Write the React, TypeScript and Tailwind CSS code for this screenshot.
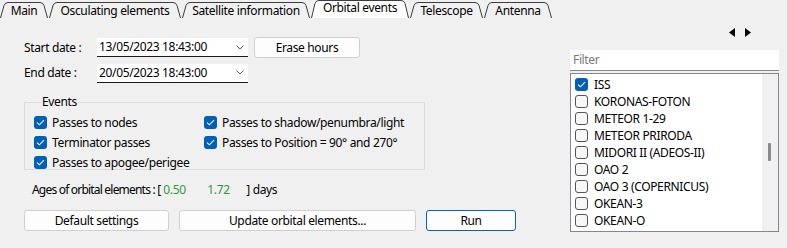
import React from "react";

const FONT = { fontFamily: '"Noto Sans", "Open Sans", sans-serif', letterSpacing: "-0.35px" };

function Tab({ label, w, active }: { label: string; w: number; active?: boolean }) {
  const h = active ? 18 : 16;
  const d = `M0.5 ${h} L4 3.5 Q5 0.5 8 0.5 L${w - 8} 0.5 Q${w - 5} 0.5 ${w - 4} 3.5 L${w - 0.5} ${h}`;
  return (
    <div
      className={`relative flex items-center justify-center ${active ? "h-[18px]" : "h-[16px] mt-[2px]"}`}
      style={{ width: w }}
    >
      <svg className="absolute inset-0" width={w} height={h} viewBox={`0 0 ${w} ${h}`}>
        <path d={d} fill={active ? "#ffffff" : "none"} stroke="#3c3c3c" strokeWidth="1" />
      </svg>
      <span className={`relative leading-none ${active ? "-mt-[3px]" : "mt-[1px]"} text-[#000]`}>{label}</span>
    </div>
  );
}

function Check({ checked }: { checked?: boolean }) {
  return checked ? (
    <div className="w-[13px] h-[13px] rounded-[3px] bg-[#005fb8] flex items-center justify-center shrink-0">
      <svg width="9" height="7" viewBox="0 0 9 7">
        <path d="M1 3.6 L3.4 5.8 L8 1.2" fill="none" stroke="#ffffff" strokeWidth="1.1" />
      </svg>
    </div>
  ) : (
    <div className="w-[13px] h-[13px] rounded-[3px] border border-[#555] bg-[#f7f7f7] shrink-0" />
  );
}

function Chevron() {
  return (
    <svg width="8" height="5" viewBox="0 0 8 5" className="shrink-0">
      <path d="M0.5 0.5 L4 4 L7.5 0.5" fill="none" stroke="#606060" strokeWidth="1" />
    </svg>
  );
}

function DateBox({ value }: { value: string }) {
  return (
    <div className="w-[151px] h-[19px] bg-white border-b border-[#1a1a1a] flex items-center pl-[2px] pr-[4px]">
      <span className="flex-1 leading-none">{value}</span>
      <Chevron />
    </div>
  );
}

function Btn({ label, w, primary }: { label: string; w: number; primary?: boolean }) {
  return (
    <div
      className={`h-[21px] rounded-[3px] flex items-center justify-center bg-[#fdfdfd] border ${
        primary ? "border-[#0067c0]" : "border-[#d0d0d0]"
      }`}
      style={{ width: w }}
    >
      {label}
    </div>
  );
}

export default function App() {
  const sats = [
    ["ISS", true],
    ["KORONAS-FOTON", false],
    ["METEOR 1-29", false],
    ["METEOR PRIRODA", false],
    ["MIDORI II (ADEOS-II)", false],
    ["OAO 2", false],
    ["OAO 3 (COPERNICUS)", false],
    ["OKEAN-3", false],
    ["OKEAN-O", false],
  ] as const;

  return (
    <div className="w-[787px] h-[248px] bg-[#f0f0f0] text-[12px] text-black overflow-hidden" style={FONT}>
      <div className="flex gap-[1px] h-[18px] items-start">
        <Tab label="Main" w={48} />
        <Tab label="Osculating elements" w={132} />
        <Tab label="Satellite information" w={128} />
        <Tab label="Orbital events" w={98} active />
        <Tab label="Telescope" w={73} />
        <Tab label="Antenna" w={68} />
      </div>

      <div className="flex">
        <div className="pl-[24px] pt-[19px] w-[560px]">
          <div className="flex items-center h-[21px]">
            <span className="w-[73px]">Start date :</span>
            <DateBox value="13/05/2023 18:43:00" />
            <div className="ml-[6px]">
              <Btn label="Erase hours" w={106} />
            </div>
          </div>
          <div className="flex items-center h-[20px] mt-[5px]">
            <span className="w-[73px]">End date :</span>
            <DateBox value="20/05/2023 18:43:00" />
          </div>

          <fieldset className="mt-[11px] w-[401px] h-[76px] border border-[#dcdcdc] pl-[9px] pt-[6px]">
            <legend className="ml-[7px] px-[1px] leading-[16px]">Events</legend>
            <div className="grid grid-cols-[170px_1fr] gap-y-[7px]">
              <div className="flex items-center gap-[5px] h-[13px]">
                <Check checked />
                <span>Passes to nodes</span>
              </div>
              <div className="flex items-center gap-[5px] h-[13px]">
                <Check checked />
                <span>Passes to shadow/penumbra/light</span>
              </div>
              <div className="flex items-center gap-[5px] h-[13px]">
                <Check checked />
                <span>Terminator passes</span>
              </div>
              <div className="flex items-center gap-[5px] h-[13px]">
                <Check checked />
                <span>Passes to Position = 90° and 270°</span>
              </div>
              <div className="flex items-center gap-[5px] h-[13px]">
                <Check checked />
                <span>Passes to apogee/perigee</span>
              </div>
            </div>
          </fieldset>

          <div className="flex items-center h-[16px] mt-[12px] pl-[8px] whitespace-nowrap">
            <span className="shrink-0 tracking-[-0.8px]">Ages of orbital elements : [</span>
            <span className="ml-[3px] w-[44px] shrink-0 text-[#2e9b3a]">0.50</span>
            <span className="w-[39px] shrink-0 text-[#2e9b3a]">1.72</span>
            <span>] days</span>
          </div>

          <div className="flex gap-[10px] mt-[12px]">
            <Btn label="Default settings" w={145} />
            <Btn label="Update orbital elements..." w={237} />
            <Btn label="Run" w={90} primary />
          </div>
        </div>

        <div className="ml-[10px] w-[209px] pt-[10px]">
          <div className="flex justify-end gap-[10px] pr-[28px] h-[9px]">
            <svg width="6" height="9" viewBox="0 0 6 9">
              <polygon points="6,0 6,9 0,4.5" fill="#000" />
            </svg>
            <svg width="6" height="9" viewBox="0 0 6 9">
              <polygon points="0,0 0,9 6,4.5" fill="#000" />
            </svg>
          </div>
          <div className="mt-[13px] h-[21px] bg-white border-b border-[#868686] rounded-t-[2px] flex items-center pl-[3px] text-[#7a7a7a]">
            Filter
          </div>
          <div className="mt-[2px] h-[159px] border border-[#828790] flex">
            <div className="flex-1 bg-white pt-[2px] pl-[4px]">
              {sats.map(([n, c]) => (
                <div key={n} className="flex items-center gap-[6px] h-[17px]">
                  <Check checked={c} />
                  <span className="leading-none">{n}</span>
                </div>
              ))}
            </div>
            <div className="w-[16px] bg-[#f0f0f0] relative">
              <div className="absolute left-[6px] top-[69px] w-[3px] h-[18px] bg-[#8a8a8a] rounded-[1px]" />
            </div>
          </div>
        </div>
      </div>
    </div>
  );
}
